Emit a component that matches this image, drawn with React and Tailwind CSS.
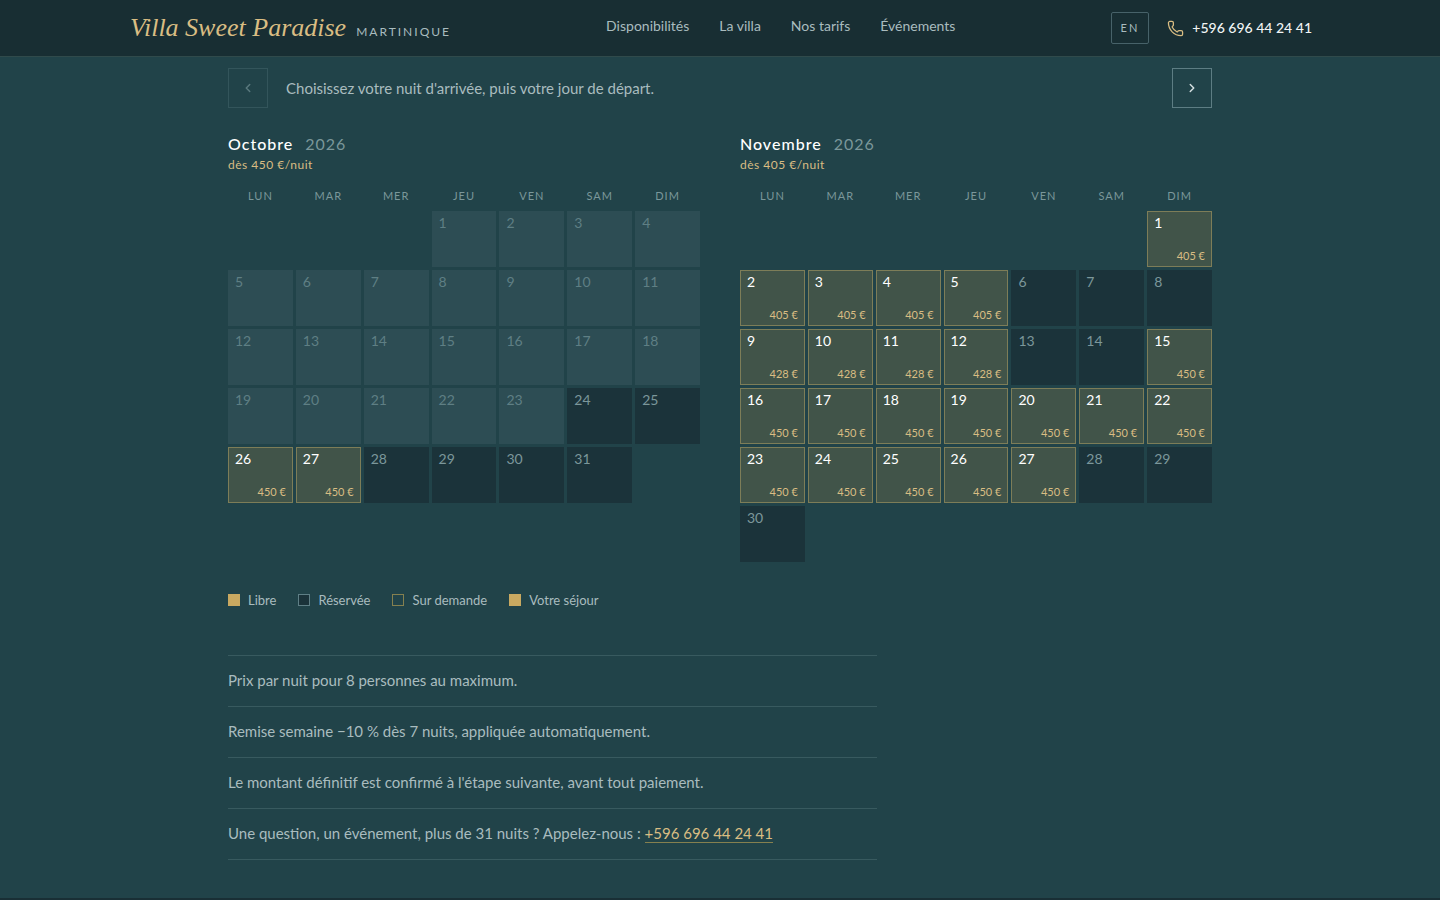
import React, { useState } from 'react';
import { ChevronLeft, ChevronRight, Phone } from 'lucide-react';

const navLinks = [
  { label: 'Disponibilités', href: '#disponibilites' },
  { label: 'La villa', href: '#villa' },
  { label: 'Nos tarifs', href: '#tarifs' },
  { label: 'Événements', href: '#evenements' },
];

const weekdays = ['Lun', 'Mar', 'Mer', 'Jeu', 'Ven', 'Sam', 'Dim'];

// offset = empty cells before the 1st, prices = nightly rate of the free days
const months = [
  {
    name: 'Octobre',
    year: 2026,
    from: 450,
    offset: 3,
    days: 31,
    pastUntil: 23,
    prices: { 26: 450, 27: 450 },
  },
  {
    name: 'Novembre',
    year: 2026,
    from: 405,
    offset: 6,
    days: 30,
    pastUntil: 0,
    prices: {
      1: 405, 2: 405, 3: 405, 4: 405, 5: 405,
      9: 428, 10: 428, 11: 428, 12: 428,
      15: 450, 16: 450, 17: 450, 18: 450, 19: 450, 20: 450, 21: 450,
      22: 450, 23: 450, 24: 450, 25: 450, 26: 450, 27: 450,
    },
  },
];

const legend = [
  { label: 'Libre', swatch: 'bg-[#c9a961]' },
  { label: 'Réservée', swatch: 'bg-[#1b333a] border border-[#5f7f86]' },
  { label: 'Sur demande', swatch: 'border border-[#85804f]' },
  { label: 'Votre séjour', swatch: 'bg-[#c9a961]' },
];

const notes = [
  'Prix par nuit pour 8 personnes au maximum.',
  'Remise semaine −10 % dès 7 nuits, appliquée automatiquement.',
  "Le montant définitif est confirmé à l'étape suivante, avant tout paiement.",
];

const Header = () => (
  <header className="sticky top-0 z-10 bg-[#182e33] border-b border-[#304a4b]">
    <div className="max-w-[1184px] h-14 mx-auto flex items-center justify-between">
      <a href="#top" className="flex items-baseline gap-2.5 pl-0.5 whitespace-nowrap">
        <span className="font-['Liberation_Serif',serif] italic text-[26px] leading-10 text-[#d9bd83]">
          Villa Sweet Paradise
        </span>
        <span className="text-xs tracking-[2px] uppercase text-[#a9bcbf]">Martinique</span>
      </a>

      <nav className="flex gap-[30px] pb-1 text-sm leading-6 text-[#a9bcbf]">
        {navLinks.map(link => (
          <a key={link.href} href={link.href} className="hover:text-white">{link.label}</a>
        ))}
      </nav>

      <div className="flex items-center gap-[18px]">
        <button type="button" className="h-8 px-[9px] border border-[#476269] rounded-xs text-[11px] tracking-[2px] text-[#a9bcbf]">
          EN
        </button>
        <a href="tel:+596696442441" className="flex items-center gap-2 text-sm font-medium text-[#f0f4f4]">
          <Phone size={17} strokeWidth={1.8} className="text-[#d9bd83]" />
          +596 696 44 24 41
        </a>
      </div>
    </div>
  </header>
);

const DayCell = ({ day, price, past, selected, onSelect }) => {
  if (!price) {
    return (
      <div className={`h-14 px-[7px] py-1 text-sm leading-4 ${past ? 'bg-[#2d4d54] text-[#5f7f84]' : 'bg-[#1b333a] text-[#7b979a]'}`}>
        {day}
      </div>
    );
  }
  return (
    <button
      type="button"
      onClick={onSelect}
      className={`h-14 px-1.5 pt-[3px] pb-0.5 flex flex-col justify-between border text-sm leading-4 ${
        selected ? 'bg-[#c9a961] border-[#c9a961] text-[#192f35]' : 'bg-[#415449] border-[#7d7d58] text-white hover:bg-[#4d5e50]'
      }`}
    >
      <span className="self-start">{day}</span>
      <span className={`self-end text-[11px] leading-4 ${selected ? 'text-[#192f35]' : 'text-[#d9bd83]'}`}>{price} €</span>
    </button>
  );
};

const Month = ({ month, selected, onSelect }) => (
  <section>
    <h3 className="flex gap-3 text-base leading-6 tracking-[1px]">
      <span className="font-medium text-white">{month.name}</span>
      <span className="text-[#7b979a]">{month.year}</span>
    </h3>
    <p className="text-xs leading-[18px] tracking-[0.5px] text-[#d9bd83]">dès {month.from} €/nuit</p>

    <div className="grid grid-cols-7 gap-[3px] mt-3.5 mb-[7px]">
      {weekdays.map(name => (
        <span key={name} className="text-center uppercase text-[11px] leading-4 tracking-[1px] text-[#7b979a]">{name}</span>
      ))}
    </div>

    <div className="grid grid-cols-7 gap-[3px]">
      {Array.from({ length: month.offset }, (_, i) => <span key={`empty-${i}`} />)}
      {Array.from({ length: month.days }, (_, i) => i + 1).map(day => (
        <DayCell
          key={day}
          day={day}
          price={month.prices[day]}
          past={day <= month.pastUntil}
          selected={selected === `${month.name}-${day}`}
          onSelect={() => onSelect(`${month.name}-${day}`)}
        />
      ))}
    </div>
  </section>
);

const App = () => {
  const [arrival, setArrival] = useState(null);

  return (
    <div className="min-h-screen bg-[#192f35] font-[Lato,sans-serif] text-[#a9bcbf]">
      <Header />

      <main id="disponibilites" className="bg-[#214349] pt-[11px] pb-[38px]">
        <div className="max-w-[984px] mx-auto">

          {/* Month navigation */}
          <div className="flex items-center gap-[18px]">
            <button type="button" disabled aria-label="Mois précédent" className="size-10 flex items-center justify-center border border-[#33555b] text-[#5a797e]">
              <ChevronLeft size={14} strokeWidth={2.5} />
            </button>
            <p className="flex-1 text-[15px] leading-6">Choisissez votre nuit d'arrivée, puis votre jour de départ.</p>
            <button type="button" aria-label="Mois suivant" className="size-10 flex items-center justify-center border border-[#5d7d83] text-[#d5dfe0]">
              <ChevronRight size={14} strokeWidth={2.5} />
            </button>
          </div>

          {/* Calendars */}
          <div className="grid grid-cols-2 items-start gap-10 mt-6">
            {months.map(month => (
              <Month key={month.name} month={month} selected={arrival} onSelect={setArrival} />
            ))}
          </div>

          {/* Legend */}
          <ul className="flex flex-wrap gap-[22px] mt-7 text-[13px] leading-5">
            {legend.map(item => (
              <li key={item.label} className="flex items-center gap-2">
                <span className={`size-3 ${item.swatch}`} />
                {item.label}
              </li>
            ))}
          </ul>

          {/* Conditions */}
          <ul className="w-[66%] mt-[45px] border-b border-[#385a5f] text-[15px] leading-6">
            {notes.map(note => (
              <li key={note} className="border-t border-[#385a5f] pt-3 pb-3.5">{note}</li>
            ))}
            <li className="border-t border-[#385a5f] pt-3 pb-3.5">
              Une question, un événement, plus de 31 nuits ? Appelez-nous :{' '}
              <a href="tel:+596696442441" className="border-b border-[#85804f] text-[#d9bd83]">+596 696 44 24 41</a>
            </li>
          </ul>
        </div>
      </main>
    </div>
  );
};

export default App;
